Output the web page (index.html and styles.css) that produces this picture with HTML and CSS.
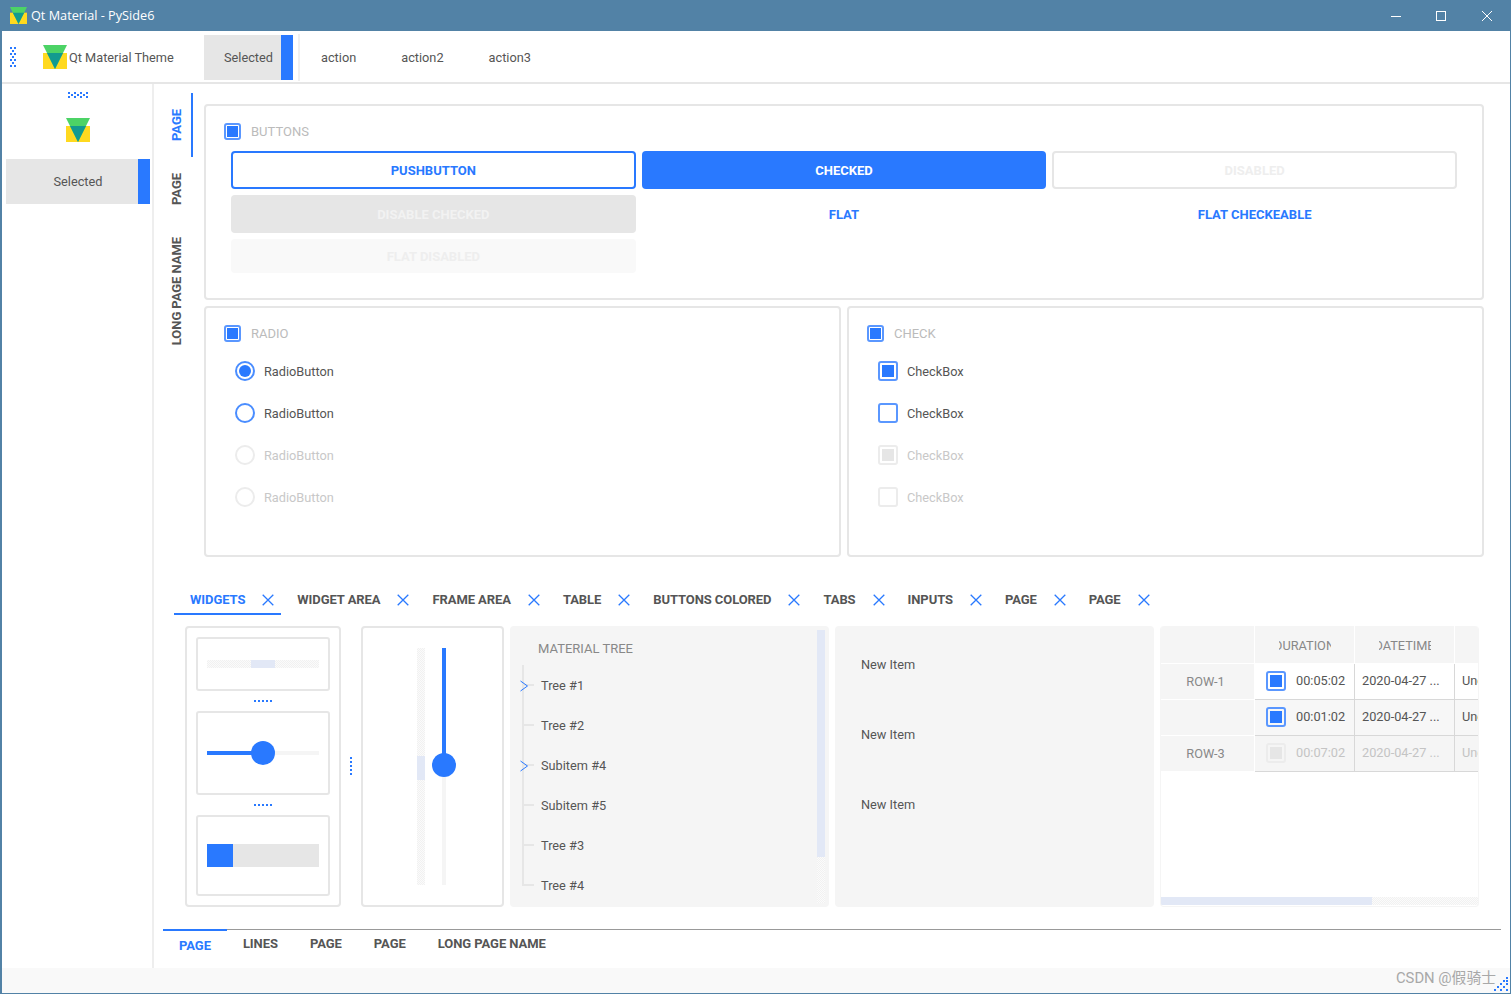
FILE: index.html
```html
<!DOCTYPE html>
<html lang="en">
<head>
<meta charset="utf-8">
<title>Qt Material - PySide6</title>
<link rel="stylesheet" href="styles.css">
</head>
<body>
<svg class="defs" width="0" height="0"><defs>
<pattern id="grip-v-dots" width="4" height="6" patternUnits="userSpaceOnUse"><rect width="2" height="2" fill="#2979ff"/><rect x="2" y="3" width="2" height="2" fill="#2979ff"/></pattern>
<pattern id="grip-h-dots" width="6" height="4" patternUnits="userSpaceOnUse"><rect width="2" height="2" fill="#2979ff"/><rect x="3" y="2" width="2" height="2" fill="#2979ff"/></pattern>
<symbol id="logo" viewBox="0 0 24 24"><rect y="8" width="24" height="16" fill="#ffd91f"/><polygon points="0,0 24,0 12,24" fill="#4cd366"/><polygon points="4,8 20,8 12,24" fill="#129a8f"/></symbol>
<symbol id="x" viewBox="0 0 12 12"><path d="M.7.7l10.6 10.6M11.3.7L.7 11.3" fill="none" stroke="#2979ff" stroke-width="1.3"/></symbol>
<symbol id="chev" viewBox="0 0 8 12"><path d="M.5 1l7 5-7 5" fill="none" stroke="#2979ff" stroke-width="1"/></symbol>
</defs></svg>
<div class="window">
  <header class="titlebar">
    <svg class="title-logo"><use href="#logo"/></svg>
    <span class="title-text">Qt Material - PySide6</span>
    <div class="win-controls">
      <svg class="win-btn" viewBox="0 0 12 12"><path d="M1 6.5h10" stroke="#fff" fill="none"/></svg>
      <svg class="win-btn" viewBox="0 0 12 12"><rect x="1.5" y="1.5" width="9" height="9" stroke="#fff" fill="none"/></svg>
      <svg class="win-btn" viewBox="0 0 12 12"><path d="M1 1l10 10M11 1L1 11" stroke="#fff" fill="none"/></svg>
    </div>
  </header>

  <div class="toolbar">
    <svg class="grip-v"><rect width="6" height="20" fill="url(#grip-v-dots)"/></svg>
    <svg class="logo tb-logo"><use href="#logo"/></svg>
    <span class="tb-label">Qt Material Theme</span>
    <div class="sel-btn tb-sel">Selected</div>
    <div class="tb-sep"></div>
    <span class="tb-action a1">action</span>
    <span class="tb-action a2">action2</span>
    <span class="tb-action a3">action3</span>
  </div>

  <div class="body">
    <aside class="side">
      <svg class="grip-h"><rect width="20" height="6" fill="url(#grip-h-dots)"/></svg>
      <svg class="logo side-logo"><use href="#logo"/></svg>
      <div class="sel-btn side-sel">Selected</div>
    </aside>

    <main class="main">
      <div class="upper">
        <nav class="vtabs">
          <div class="vtab active t1"><span>PAGE</span></div>
          <div class="vtab t1"><span>PAGE</span></div>
          <div class="vtab t3"><span>LONG PAGE NAME</span></div>
        </nav>
        <div class="groups">
          <section class="group g-buttons">
            <div class="g-title"><span class="cb small on"></span><span>BUTTONS</span></div>
            <div class="btn-grid">
              <div class="btn outline">PUSHBUTTON</div>
              <div class="btn filled">CHECKED</div>
              <div class="btn disabled-outline">DISABLED</div>
              <div class="btn disabled-filled">DISABLE CHECKED</div>
              <div class="btn flat">FLAT</div>
              <div class="btn flat">FLAT CHECKEABLE</div>
              <div class="btn disabled-flat">FLAT DISABLED</div>
            </div>
          </section>
          <div class="group-row">
            <section class="group g-half">
              <div class="g-title"><span class="cb small on"></span><span>RADIO</span></div>
              <div class="opts">
                <div class="opt"><span class="rb on"></span>RadioButton</div>
                <div class="opt"><span class="rb"></span>RadioButton</div>
                <div class="opt off"><span class="rb"></span>RadioButton</div>
                <div class="opt off"><span class="rb"></span>RadioButton</div>
              </div>
            </section>
            <section class="group g-half">
              <div class="g-title"><span class="cb small on"></span><span>CHECK</span></div>
              <div class="opts">
                <div class="opt"><span class="cb on"></span>CheckBox</div>
                <div class="opt"><span class="cb"></span>CheckBox</div>
                <div class="opt off"><span class="cb on"></span>CheckBox</div>
                <div class="opt off"><span class="cb"></span>CheckBox</div>
              </div>
            </section>
          </div>
        </div>
      </div>

      <div class="htabs">
        <div class="htab active"><span>WIDGETS</span><svg class="x"><use href="#x"/></svg></div>
        <div class="htab"><span>WIDGET AREA</span><svg class="x"><use href="#x"/></svg></div>
        <div class="htab"><span>FRAME AREA</span><svg class="x"><use href="#x"/></svg></div>
        <div class="htab"><span>TABLE</span><svg class="x"><use href="#x"/></svg></div>
        <div class="htab"><span>BUTTONS COLORED</span><svg class="x"><use href="#x"/></svg></div>
        <div class="htab"><span>TABS</span><svg class="x"><use href="#x"/></svg></div>
        <div class="htab"><span>INPUTS</span><svg class="x"><use href="#x"/></svg></div>
        <div class="htab"><span>PAGE</span><svg class="x"><use href="#x"/></svg></div>
        <div class="htab"><span>PAGE</span><svg class="x"><use href="#x"/></svg></div>
      </div>

      <div class="panels">
        <div class="frame panel-a">
          <div class="card card-1">
            <div class="hscroll dither"><div class="hthumb"></div></div>
          </div>
          <div class="dots-h"></div>
          <div class="card card-2">
            <div class="hslider"><div class="hfill"></div><div class="knob"></div></div>
          </div>
          <div class="dots-h"></div>
          <div class="card card-3">
            <div class="progress"><div class="pfill"></div></div>
          </div>
        </div>
        <div class="split"><div class="dots-v"></div></div>
        <div class="frame panel-b">
          <div class="vscroll dither"><div class="vthumb"></div></div>
          <div class="vslider"><div class="vfill"></div><div class="knob"></div></div>
        </div>

        <div class="tree">
          <div class="tree-main">
            <div class="tree-head">MATERIAL TREE</div>
            <div class="tree-rows">
              <div class="tree-row"><svg class="chev"><use href="#chev"/></svg>Tree #1</div>
              <div class="tree-row">Tree #2</div>
              <div class="tree-row"><svg class="chev"><use href="#chev"/></svg>Subitem #4</div>
              <div class="tree-row">Subitem #5</div>
              <div class="tree-row">Tree #3</div>
              <div class="tree-row last">Tree #4</div>
            </div>
          </div>
          <div class="tree-scroll dither"><div class="tree-thumb"></div></div>
        </div>

        <div class="list">
          <div class="list-item">New Item</div>
          <div class="list-item">New Item</div>
          <div class="list-item">New Item</div>
        </div>

        <div class="table-wrap">
          <div class="table">
            <div class="th corner"></div>
            <div class="th"><span class="clip-head"><span>DURATION</span></span></div>
            <div class="th"><span class="clip-head"><span>DATETIME</span></span></div>
            <div class="th tail"></div>

            <div class="rh">ROW-1</div>
            <div class="td white"><span class="cb on"></span>00:05:02</div>
            <div class="td white">2020-04-27 ...</div>
            <div class="td white tail">Unchecked</div>

            <div class="rh"></div>
            <div class="td alt"><span class="cb on"></span>00:01:02</div>
            <div class="td alt">2020-04-27 ...</div>
            <div class="td alt tail">Unchecked</div>

            <div class="rh">ROW-3</div>
            <div class="td off"><span class="cb on"></span>00:07:02</div>
            <div class="td off">2020-04-27 ...</div>
            <div class="td off tail">Unchecked</div>
          </div>
          <div class="table-scroll dither"><div class="table-thumb"></div></div>
        </div>
      </div>

      <div class="btabs">
        <div class="btab active">PAGE</div>
        <div class="btab">LINES</div>
        <div class="btab">PAGE</div>
        <div class="btab">PAGE</div>
        <div class="btab">LONG PAGE NAME</div>
      </div>
    </main>
  </div>

  <footer class="status">
    <span class="watermark">CSDN @假骑士</span>
    <svg class="size-grip" viewBox="0 0 14 14"><g fill="#2979ff"><rect x="12" y="0" width="2" height="2"/><rect x="9" y="3" width="2" height="2"/><rect x="12" y="3" width="2" height="2"/><rect x="6" y="6" width="2" height="2"/><rect x="12" y="6" width="2" height="2"/><rect x="3" y="9" width="2" height="2"/><rect x="9" y="9" width="2" height="2"/><rect x="0" y="12" width="2" height="2"/><rect x="6" y="12" width="2" height="2"/><rect x="12" y="12" width="2" height="2"/></g></svg>
  </footer>
</div>
</body>
</html>
```

FILE: styles.css
```css
* { box-sizing: border-box; }
html, body { margin: 0; padding: 0; }
body { font-family: Roboto, "Noto Sans CJK SC", sans-serif; font-size: 12.75px; color: #555; background: #fff; overflow: hidden; }
.defs { position: absolute; }

.window { width: 1511px; height: 994px; display: flex; flex-direction: column; border: solid #5282a6; border-width: 0 1px 1px 2px; }

/* title bar */
.titlebar { height: 31px; margin-left: -2px; margin-right: -1px; background: #5282a6; display: flex; align-items: center; color: #fff; flex: none; }
.title-logo { width: 17px; height: 17px; margin-left: 10px; }
.title-text { margin-left: 4px; margin-top: -2px; font: 12.7px "Open Sans", sans-serif; color: #fff; }
.win-controls { margin-left: auto; display: flex; gap: 33px; margin-right: 18px; }
.win-btn { width: 12px; height: 12px; display: block; }
.win-btn + .win-btn + .win-btn { margin-left: 1px; }

/* top tool bar */
.toolbar { height: 53px; flex: none; border-bottom: 2px solid #e6e6e6; display: flex; align-items: center; position: relative; padding-left: 8px; }
.grip-v { width: 6px; height: 20px; display: block; flex: none; margin-top: 1px; }
.logo { width: 24px; height: 24px; display: block; }
.tb-logo { margin-left: 27px; margin-top: 1px; }
.tb-label { margin-left: 2px; margin-top: 1px; width: 135px; }
.sel-btn { background: #e6e6e6; height: 45px; display: flex; align-items: center; justify-content: center; border-right: 12px solid #2979ff; padding-left: 12px; }
.tb-sel { width: 89px; margin-top: 1px; }
.tb-sep { width: 2px; height: 47px; background: #f0f0f0; margin-left: 5px; margin-top: 1px; }
.tb-action { margin-top: 1px; }
.a1 { margin-left: 21px; }
.a2 { margin-left: 45px; }
.a3 { margin-left: 45px; }

/* main */
.body { flex: 1; display: flex; min-height: 0; }
.side { width: 152px; flex: none; border-right: 2px solid #eee; display: flex; flex-direction: column; align-items: center; padding: 8px 2px 0 4px; }
.grip-h { width: 20px; height: 6px; display: block; flex: none; }
.side-logo { margin-top: 20px; }
.side-sel { width: 144px; margin-top: 17px; }

.main { flex: 1; min-width: 0; display: flex; flex-direction: column; }
.upper { display: flex; padding-top: 9px; }
.vtabs { width: 39px; flex: none; display: flex; flex-direction: column; }
.vtab { width: 39px; display: flex; align-items: center; justify-content: center; padding-left: 7px; border-right: 2px solid transparent; font-weight: 700; font-size: 13px; letter-spacing: -0.05px; }
.vtab span { writing-mode: vertical-rl; transform: rotate(180deg); white-space: nowrap; }
.vtab.t1 { height: 64px; }
.vtab.t3 { height: 140px; }
.vtab.active { border-right-color: #2979ff; color: #2979ff; }

.groups { margin: 11px 0 0 11px; width: 1280px; display: flex; flex-direction: column; gap: 6px; }
.group { border: 2px solid #e6e6e6; border-radius: 4px; padding: 16px 25px 0 23px; }
.g-buttons { height: 196px; }
.group-row { display: flex; gap: 6px; }
.g-half { flex: 1; height: 251px; }
.g-title { display: flex; align-items: center; color: #bbb; height: 18px; margin-left: -5px; gap: 10px; font-size: 13px; }

.btn-grid { display: grid; grid-template-columns: repeat(3, 1fr); grid-template-rows: 38px 38px 34px; gap: 6px; margin-top: 11px; margin-left: 2px; }
.btn { border-radius: 4px; display: flex; align-items: center; justify-content: center; font-weight: 700; font-size: 13px; color: #2979ff; }
.outline { border: 2px solid #2979ff; }
.filled { background: #2979ff; color: #fff; }
.disabled-outline { border: 2px solid #e6e6e6; color: #eee; }
.disabled-filled { background: #e6e6e6; color: #f2f2f2; }
.disabled-flat { background: #f9f9f9; color: #eee; }

.opts { display: flex; flex-direction: column; margin-top: 8px; margin-left: 6px; }
.opt { height: 42px; display: flex; align-items: center; gap: 9px; }
.opt.off { color: #c8c8c8; }

.cb { width: 20px; height: 20px; border: 2px solid #5a97ff; border-radius: 3px; display: flex; align-items: center; justify-content: center; flex: none; }
.cb.on::before { content: ""; width: 12px; height: 12px; background: #2979ff; }
.cb.small { width: 17px; height: 17px; }
.cb.small.on::before { width: 11px; height: 11px; }
.off .cb { border-color: #ececec; }
.off .cb.on::before { background: #e6e6e6; }
.rb { width: 20px; height: 20px; border: 2px solid #4a8dff; border-radius: 50%; display: flex; align-items: center; justify-content: center; flex: none; }
.rb.on::before { content: ""; width: 12px; height: 12px; border-radius: 50%; background: #2979ff; }
.off .rb { border-color: #ececec; }

/* inner tabs */
.htabs { display: flex; margin: 28px 0 0 20px; height: 30px; flex: none; }
.htab { height: 30px; padding: 0 7px 0 16px; display: flex; align-items: center; font-weight: 700; font-size: 13px; letter-spacing: -0.08px; border-bottom: 2px solid transparent; }
.htab .x { width: 12px; height: 12px; margin-left: 17px; margin-top: 2px; }
.htab.active { color: #2979ff; border-bottom-color: #2979ff; }

/* panels */
.panels { display: flex; gap: 6px; margin: 11px 0 0 31px; height: 281px; flex: none; }
.frame { border: 2px solid #e6e6e6; border-radius: 4px; flex: none; }
.panel-a { width: 156px; padding: 9px 9px; display: flex; flex-direction: column; }
.split { width: 8px; flex: none; display: flex; align-items: center; justify-content: flex-start; padding-left: 3px; }
.dots-v { width: 2px; height: 18px; background: repeating-linear-gradient(180deg, #2979ff 0 2px, transparent 2px 4px); margin-top: -2px; }
.dots-h { width: 18px; height: 2px; background: repeating-linear-gradient(90deg, #2979ff 0 2px, transparent 2px 4px); margin: 9px auto 9px; }
.card { border: 2px solid #e6e6e6; border-radius: 3px; padding: 0 9px; flex: none; position: relative; }
.card-1 { height: 54px; padding-top: 21px; }
.card-2 { height: 84px; padding-top: 38px; }
.card-3 { height: 81px; padding-top: 27px; }
.dither { background-image: repeating-conic-gradient(#f1f1f1 0 25%, #fbfbfb 0 50%); background-size: 2px 2px; }
.hscroll { height: 8px; padding-left: 44px; }
.hthumb { width: 24px; height: 8px; background: #e2e8f6; }
.hslider { height: 4px; background: #f5f5f5; position: relative; }
.hfill { width: 46px; height: 4px; background: #2979ff; }
.knob { width: 24px; height: 24px; border-radius: 50%; background: #2979ff; position: absolute; }
.hslider .knob { left: 44px; top: -10px; }
.progress { height: 23px; background: #e6e6e6; }
.pfill { width: 26px; height: 23px; background: #2979ff; }

.panel-b { width: 143px; padding: 20px 0 0 54px; display: flex; }
.vscroll { width: 8px; height: 237px; padding-top: 108px; }
.vthumb { width: 8px; height: 24px; background: #e2e8f6; }
.vslider { width: 4px; height: 237px; background: #f5f5f5; margin-left: 17px; position: relative; }
.vfill { width: 4px; height: 110px; background: #2979ff; }
.vslider .knob { left: -10px; top: 105px; }

.tree { width: 319px; flex: none; background: #f5f5f5; border-radius: 4px; padding: 4px 4px 4px 12px; display: flex; }
.tree-main { flex: 1; min-width: 0; }
.tree-head { color: #888; padding-left: 16px; height: 35px; line-height: 37px; font-size: 13px; }
.tree-row { height: 40px; padding-left: 19px; display: flex; align-items: center; position: relative; }
.tree-row::before { content: ""; position: absolute; left: 0; top: 0; bottom: 0; width: 2px; background: #e6e6e6; }
.tree-row::after { content: ""; position: absolute; left: 2px; top: 19px; width: 10px; height: 2px; background: #e6e6e6; }
.tree-row.last::before { bottom: 19px; }
.chev { position: absolute; left: -2px; top: 15px; width: 8px; height: 12px; z-index: 1; }
.tree-scroll { width: 8px; flex: none; }
.tree-thumb { width: 8px; height: 227px; background: #e2e8f6; }

.list { width: 319px; flex: none; background: #f5f5f5; border-radius: 4px; padding: 3px 0 0 26px; }
.list-item { height: 70px; display: flex; align-items: center; }

.table-wrap { width: 319px; flex: none; border: 1px solid #f5f5f5; border-radius: 4px; border-top: 0; display: flex; flex-direction: column; justify-content: space-between; overflow: hidden; }
.table { display: grid; grid-template-columns: 94px 100px 100px 23px; grid-template-rows: 38px 36px 36px 36px; }
.th { background: #f5f5f5; color: #888; display: flex; align-items: center; justify-content: center; border-right: 1px solid #fff; border-bottom: 1px solid #fff; padding-top: 2px; }
.th.tail { border-right: 0; }
.clip-head { width: 52px; overflow: hidden; display: flex; justify-content: center; }
.clip-head span { flex: none; }
.rh { background: #f5f5f5; color: #888; display: flex; align-items: center; justify-content: center; border-right: 1px solid #fff; border-bottom: 1px solid #fff; padding-right: 4px; }
.td { display: flex; align-items: center; padding: 0 0 2px 7px; border-right: 1px solid #d8d8d8; border-bottom: 1px solid #d8d8d8; white-space: nowrap; overflow: hidden; gap: 10px; }
.td:has(.cb) { padding-left: 11px; }
.td.tail { border-right: 0; }
.td.white { background: #fff; }
.td.alt { background: #f7f7f7; }
.td.off { background: #f5f5f5; color: #c4c4c4; }
.table-scroll { height: 8px; margin-bottom: 1px; }
.table-thumb { width: 211px; height: 8px; background: #e2e8f6; }

/* bottom tabs */
.btabs { display: flex; margin: 22px 9px 0 9px; border-top: 1px solid #999; height: 38px; flex: none; }
.btab { padding: 5px 16px 0; margin-top: -1px; font-weight: 700; font-size: 13px; letter-spacing: -0.06px; border-top: 2px solid transparent; line-height: 15px; }
.btab.active { color: #2979ff; border-top-color: #2979ff; padding-top: 7px; }

/* status */
.status { height: 25px; flex: none; background: #f9f9f9; display: flex; justify-content: flex-end; align-items: center; position: relative; padding-right: 14px; }
.watermark { font-size: 14.8px; color: #a8a8a8; margin-top: -8px; }
.size-grip { position: absolute; right: 2px; bottom: 2px; width: 14px; height: 14px; }
```
